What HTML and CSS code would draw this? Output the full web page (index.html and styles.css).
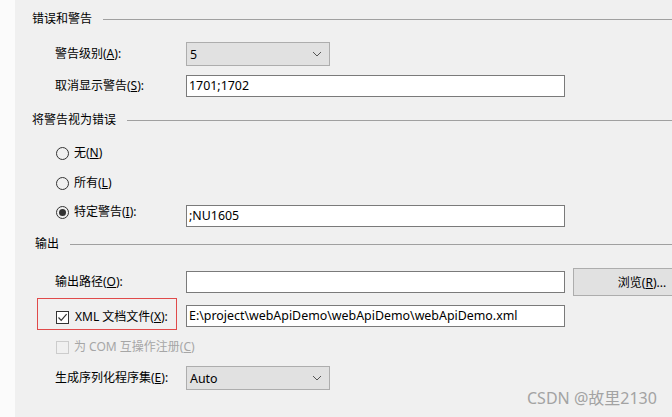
FILE: index.html
```html
<!DOCTYPE html>
<html lang="zh">
<head>
<meta charset="utf-8">
<title>生成</title>
<link rel="stylesheet" href="styles.css">
</head>
<body>
<div class="page">
  <div class="strip"></div>
  <div class="content">
    <div class="title t1"><span>错误和警告</span><i class="rule"></i></div>

    <div class="row r-select1">
      <span class="label">警告级别(<u>A</u>):</span>
      <div class="select"><span>5</span><svg class="chev" width="10" height="6" viewBox="0 0 10 6"><path d="M1 1 L5 5 L9 1" fill="none" stroke="#555" stroke-width="1"/></svg></div>
    </div>

    <div class="row r-input1">
      <span class="label">取消显示警告(<u>S</u>):</span>
      <div class="input">1701;1702</div>
    </div>

    <div class="title t2"><span>将警告视为错误</span><i class="rule"></i></div>

    <div class="row r-radio1">
      <span class="radio"></span><span class="rtext">无(<u>N</u>)</span>
    </div>
    <div class="row r-radio2">
      <span class="radio"></span><span class="rtext">所有(<u>L</u>)</span>
    </div>
    <div class="row r-radio3">
      <div class="label rlabel"><span class="radio on"></span><span class="rtext">特定警告(<u>I</u>):</span></div>
      <div class="input in3">;NU1605</div>
    </div>

    <div class="title t3"><span>输出</span><i class="rule"></i></div>

    <div class="row r-path">
      <span class="label">输出路径(<u>O</u>):</span>
      <div class="input"></div>
      <div class="button">浏览(<u>R</u>)...</div>
    </div>

    <div class="row r-xml">
      <div class="mark">
        <span class="check"><svg width="11" height="11" viewBox="0 0 11 11"><path d="M1.5 5.5 L4.2 8.3 L9.6 2.2" fill="none" stroke="#333" stroke-width="1.2"/></svg></span>
        <span class="rtext">XML 文档文件(<u>X</u>):</span>
      </div>
      <div class="input inxml">E:\project\webApiDemo\webApiDemo\webApiDemo.xml</div>
    </div>

    <div class="row r-com">
      <span class="check off"></span><span class="rtext dis">为 COM 互操作注册(<u>C</u>)</span>
    </div>

    <div class="row r-select2">
      <span class="label">生成序列化程序集(<u>E</u>):</span>
      <div class="select"><span>Auto</span><svg class="chev" width="10" height="6" viewBox="0 0 10 6"><path d="M1 1 L5 5 L9 1" fill="none" stroke="#555" stroke-width="1"/></svg></div>
    </div>
  </div>
  <div class="watermark">CSDN @故里2130</div>
</div>
</body>
</html>
```

FILE: styles.css
```css
html, body {
  margin: 0;
  padding: 0;
  width: 672px;
  height: 417px;
  overflow: hidden;
  background: #f0f0f0;
}
body {
  font-family: "Noto Sans", "Noto Sans CJK SC", sans-serif;
  font-size: 12px;
  color: #000;
}
u { text-decoration: underline; text-underline-offset: 1px; }

.page {
  position: relative;
  display: flex;
  width: 672px;
  height: 417px;
  overflow: hidden;
}
.strip {
  width: 15px;
  flex: none;
  background: #fbfbfb;
}
.content {
  flex: 1;
  display: flex;
  flex-direction: column;
  padding-left: 17px;
  min-width: 0;
}

.title {
  display: flex;
  align-items: center;
  height: 16px;
  line-height: 16px;
  white-space: nowrap;
}
.title .rule {
  flex: 1;
  border-top: 1px solid #a0a0a0;
  margin-left: 11px;
  height: 0;
}
.t1 { margin-top: 11px; }
.t2 { margin-top: 15px; }
.t3 { margin-top: 9px; padding-left: 3px; }

.row {
  display: flex;
  align-items: center;
  padding-left: 23px;
  white-space: nowrap;
}
.label {
  width: 131px;
  flex: none;
  line-height: 16px;
}
.select {
  flex: none;
  width: 144px;
  height: 24px;
  box-sizing: border-box;
  background: #e1e1e1;
  border: 1px solid #adadad;
  display: flex;
  align-items: center;
  justify-content: space-between;
  padding: 0 7px 0 3px;
  font-size: 12.4px;
}
.chev { display: block; }
.input {
  flex: none;
  width: 379px;
  height: 22px;
  box-sizing: border-box;
  background: #fff;
  border: 1px solid #7a7a7a;
  line-height: 20px;
  padding-left: 2px;
  overflow: hidden;
  font-size: 12.4px;
}
.button {
  flex: none;
  width: 136px;
  height: 28px;
  box-sizing: border-box;
  margin-left: 8px;
  background: #e1e1e1;
  border: 1px solid #adadad;
  display: flex;
  align-items: center;
  justify-content: center;
  padding-left: 2px;
}

.r-select1 { margin-top: 15px; height: 24px; }
.r-input1 { margin-top: 9px; height: 22px; }

.radio {
  width: 13px;
  height: 13px;
  box-sizing: border-box;
  border: 1px solid #333;
  border-radius: 50%;
  flex: none;
  margin-left: 1px;
  display: flex;
  align-items: center;
  justify-content: center;
}
.radio.on::after {
  content: "";
  width: 7px;
  height: 7px;
  border-radius: 50%;
  background: #333;
}
.rtext {
  margin-left: 5px;
  line-height: 16px;
}
.r-radio1 { margin-top: 17px; height: 16px; }
.r-radio2 { margin-top: 14px; height: 16px; }
.r-radio3 { margin-top: 13px; align-items: flex-start; }
.rlabel { display: flex; align-items: center; height: 16px; }
.in3 { margin-top: 1px; }

.r-path { margin-top: 16px; height: 28px; }

.r-xml {
  margin-top: 2px;
  padding-left: 5px;
  align-items: flex-start;
}
.mark {
  width: 140px;
  height: 32px;
  box-sizing: border-box;
  border: 1px solid #e04a4a;
  display: flex;
  align-items: center;
  padding: 6px 0 0 18px;
  flex: none;
}
.check {
  width: 13px;
  height: 13px;
  box-sizing: border-box;
  border: 1px solid #333;
  background: #fff;
  flex: none;
  display: flex;
  align-items: center;
  justify-content: center;
}
.check.off { border-color: #cccccc; background: #f0f0f0; margin-left: 1px; }
.mark .rtext { margin-left: 6px; }
.inxml { margin-top: 7px; margin-left: 9px; }

.r-com { margin-top: 9px; height: 16px; }
.dis { color: #a6a6a6; }

.r-select2 { margin-top: 11px; height: 24px; }

.watermark {
  position: absolute;
  left: 527px;
  top: 388px;
  font-size: 16px;
  line-height: 20px;
  color: #a3a3a3;
  white-space: nowrap;
}
```
